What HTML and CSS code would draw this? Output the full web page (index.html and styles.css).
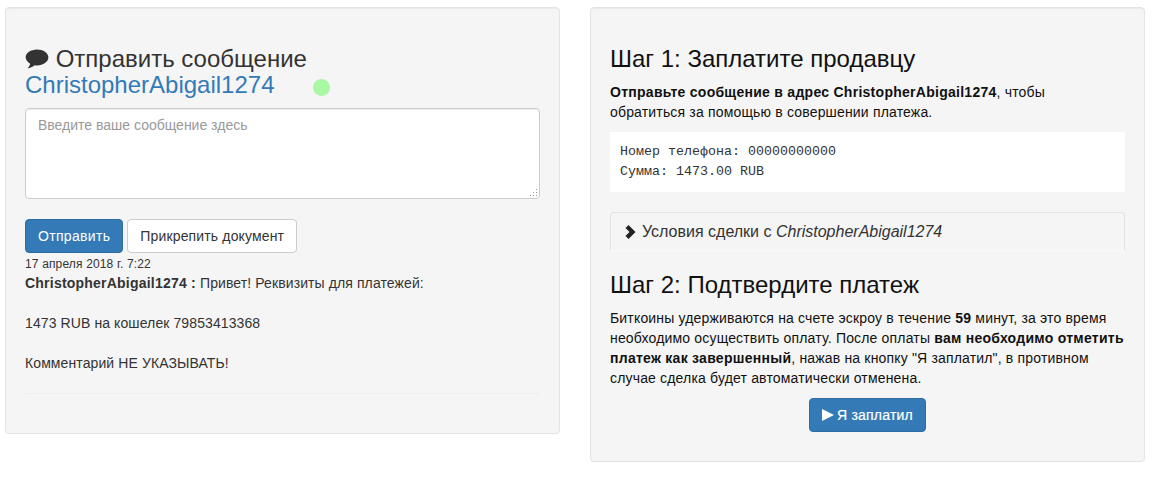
FILE: index.html
```html
<!DOCTYPE html>
<html lang="ru">
<head>
<meta charset="utf-8">
<title>Сделка</title>
<link rel="stylesheet" href="styles.css">
</head>
<body>
<div class="row">
  <section class="well well-left">
    <h3 class="chat-title">
      <svg class="icon-comment" viewBox="0 0 26 24" aria-hidden="true"><path d="M13 1.5C6.2 1.5.6 5.4.6 10.2c0 2.8 1.9 5.300 4.900 6.900-.3 1.900-1.300 3.400-2.900 4.900 2.900-.2 5.600-1.300 7.700-3.200.9.100 1.800.2 2.700.2 6.800 0 12.400-3.900 12.400-8.800S19.800 1.500 13 1.500z"/></svg>
      Отправить сообщение<br>
      <a class="user-link" href="#">ChristopherAbigail1274</a><span class="status-dot"></span>
    </h3>
    <div class="input-wrap">
      <textarea class="msg-input" placeholder="Введите ваше сообщение здесь"></textarea>
      <svg class="grip" viewBox="0 0 8 8" aria-hidden="true"><path d="M6 0h1v1H6zM3 3h1v1H3zM6 3h1v1H6zM0 6h1v1H0zM3 6h1v1H3zM6 6h1v1H6z"/></svg>
    </div>
    <div class="actions">
      <button class="btn btn-primary btn-send" type="button">Отправить</button>
      <button class="btn btn-default" type="button">Прикрепить документ</button>
    </div>
    <div class="msg-date">17 апреля 2018 г. 7:22</div>
    <p class="msg-text"><b>ChristopherAbigail1274 :</b> Привет! Реквизиты для платежей:<br><br>1473 RUB на кошелек 79853413368<br><br>Комментарий НЕ УКАЗЫВАТЬ!</p>
    <hr class="divider">
  </section>
  <section class="well well-right">
    <h3 class="step step-first">Шаг 1: Заплатите продавцу</h3>
    <p class="body-text"><b>Отправьте сообщение в адрес ChristopherAbigail1274</b>, чтобы<br>обратиться за помощью в совершении платежа.</p>
    <pre class="details">Номер телефона: 00000000000
Сумма: 1473.00 RUB</pre>
    <div class="terms">
      <svg class="icon-chevron" viewBox="0 0 12 14" aria-hidden="true"><path d="M3.500 0l7 7-7 7L.5 11l4-4-4-4z"/></svg>
      <span>Условия сделки с <i>ChristopherAbigail1274</i></span>
    </div>
    <h3 class="step step-second">Шаг 2: Подтвердите платеж</h3>
    <p class="body-text body-nowrap">Биткоины удерживаются на счете эскроу в течение <b>59</b> минут, за это время<br>необходимо осуществить оплату. После оплаты <b>вам необходимо отметить<br>платеж как завершенный</b>, нажав на кнопку "Я заплатил", в противном<br>случае сделка будет автоматически отменена.</p>
    <div class="paid-row">
      <button class="btn btn-primary btn-paid" type="button"><svg class="icon-play" viewBox="0 0 12 12" aria-hidden="true"><path d="M0 0l12 6-12 6z"/></svg>Я заплатил</button>
    </div>
  </section>
</div>
</body>
</html>
```
FILE: styles.css
```css
* { box-sizing: border-box; }
html, body { margin: 0; background: #fff; }
body {
  font-family: "Liberation Sans", Arial, sans-serif;
  font-size: 14px;
  line-height: 20px;
  color: #333;
}
b { letter-spacing: .27px; }
.row {
  display: flex;
  align-items: flex-start;
  gap: 30px;
  padding: 7px 13px 0 5px;
}
.well {
  flex: 0 0 555px;
  background: #f5f5f5;
  border: 1px solid #e3e3e3;
  border-radius: 4px;
  box-shadow: inset 0 1px 1px rgba(0,0,0,.05);
  padding: 19px;
}
.well-left { height: 427px; }
.well-right { height: 455px; color: #111; }
.chat-title {
  margin: 19px 0 10px;
  font-size: 24px;
  font-weight: 400;
  line-height: 26px;
  color: #333;
}
.icon-comment { width: 24px; height: 22px; fill: #333; vertical-align: -3px; }
.user-link { color: #337ab7; text-decoration: none; }
.status-dot {
  display: inline-block;
  width: 17px;
  height: 17px;
  margin-left: 38px;
  border-radius: 50%;
  background: #a9f9a4;
  vertical-align: -3px;
}
.input-wrap { position: relative; height: 91px; }
.msg-input {
  display: block;
  width: 100%;
  height: 91px;
  padding: 6px 12px;
  border: 1px solid #ccc;
  border-radius: 4px;
  box-shadow: inset 0 1px 1px rgba(0,0,0,.075);
  background: #fff;
  font: 14px/20px "Liberation Sans", Arial, sans-serif;
  color: #555;
  outline: 0;
  resize: none;
}
.msg-input::placeholder { color: #999; opacity: 1; }
.grip { position: absolute; right: 2px; bottom: 2px; width: 8px; height: 8px; fill: #999; }
.actions { display: flex; gap: 4px; margin-top: 20px; }
.btn {
  height: 34px;
  padding: 6px 12px;
  border: 1px solid transparent;
  border-radius: 4px;
  font: 14px/20px "Liberation Sans", Arial, sans-serif;
  letter-spacing: .15px;
  white-space: nowrap;
}
.btn-primary { background: #337ab7; border-color: #2e6da4; color: #fff; }
.btn-default { background: #fff; border-color: #ccc; color: #333; }
.btn-send { letter-spacing: .32px; }
.msg-date { margin-top: 4px; font-size: 12px; line-height: 14px; letter-spacing: .15px; }
.msg-text { margin: 0; padding-top: 2px; letter-spacing: .1px; }
.msg-text b { letter-spacing: .22px; }
.divider { margin: 20px 0 0; border: 0; border-top: 1px solid #eee; }
.step { margin: 0; font-size: 24px; font-weight: 400; line-height: 26px; color: #111; }
.step-first { margin: 19px 0 10px; }
.step-second { margin: 21px 0 10px; }
.body-text { margin: 0; letter-spacing: .17px; }
.body-nowrap { white-space: nowrap; }
.details {
  margin: 10px 0 20px;
  height: 60px;
  padding: 9.500px 10px;
  background: #fff;
  font: 13.340px/20px "Liberation Mono", "Courier New", monospace;
  color: #333;
}
.terms {
  display: flex;
  align-items: center;
  gap: 5px;
  height: 39px;
  padding: 1px 14px 0;
  border: 1px solid #e3e3e3;
  border-bottom-color: #f9f9f9;
  border-radius: 4px 4px 0 0;
  background: #f5f5f5;
  font-size: 16px;
  color: #333;
}
.icon-chevron { width: 12px; height: 14px; fill: #222; }
.paid-row { display: flex; justify-content: center; margin-top: 10px; }
.btn-paid { display: flex; align-items: center; gap: 3px; padding: 6px 12px; -webkit-text-stroke: .2px #fff; letter-spacing: .2px; }
.icon-play { width: 12px; height: 12px; fill: #fff; }
```
